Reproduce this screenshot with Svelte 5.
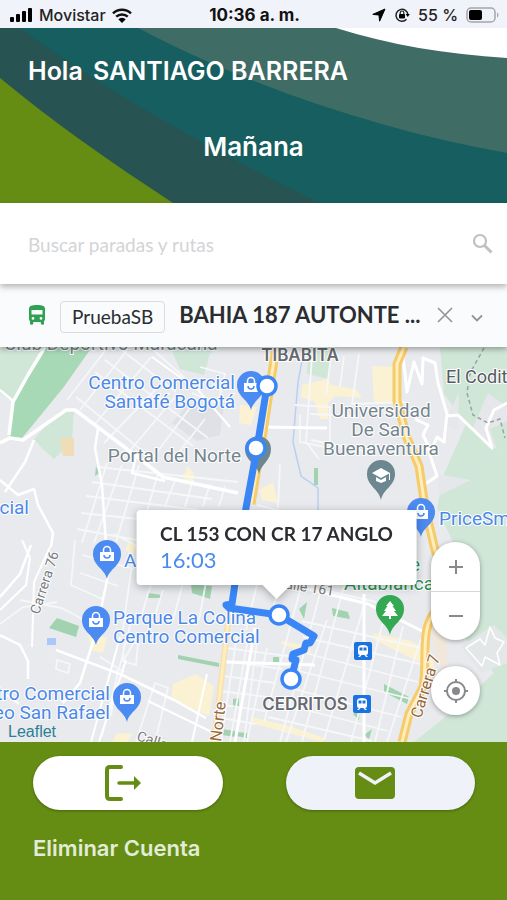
<script lang="ts">
  type Point = { x: number; y: number };
  type Label = Point & { text: string; kind: string; anchor?: string; rotate?: number };

  const user = 'SANTIAGO BARRERA';
  const stop = { name: 'CL 153 CON CR 17 ANGLO', time: '16:03' };

  let query = '';
  let routeVisible = true;

  // map geometry, in the units of the map viewBox
  const stops: Point[] = [
    { x: 267, y: 386 },
    { x: 256, y: 448 },
    { x: 279, y: 615 },
    { x: 291, y: 679 }
  ];

  const shops: Point[] = [
    { x: 251, y: 386 },
    { x: 107, y: 555 },
    { x: 96, y: 621 },
    { x: 127, y: 698 },
    { x: 421, y: 513 }
  ];

  const stations: Point[] = [
    { x: 363, y: 651 },
    { x: 362, y: 704 }
  ];

  const labels: Label[] = [
    { text: 'Club Deportivo Maracaná', x: 4, y: 350, kind: 'place' },
    { text: 'TIBABITA', x: 300, y: 361, kind: 'area', anchor: 'middle' },
    { text: 'El Codito', x: 446, y: 383, kind: 'town' },
    { text: 'Centro Comercial', x: 235, y: 389, kind: 'shop', anchor: 'end' },
    { text: 'Santafé Bogotá', x: 235, y: 408, kind: 'shop', anchor: 'end' },
    { text: 'Universidad', x: 381, y: 417, kind: 'place', anchor: 'middle' },
    { text: 'De San', x: 381, y: 436, kind: 'place', anchor: 'middle' },
    { text: 'Buenaventura', x: 381, y: 455, kind: 'place', anchor: 'middle' },
    { text: 'Portal del Norte', x: 241, y: 462, kind: 'place', anchor: 'end' },
    { text: 'Comercial', x: 29, y: 514, kind: 'shop', anchor: 'end' },
    { text: 'PriceSmart', x: 439, y: 525, kind: 'shop' },
    { text: 'Alta', x: 124, y: 567, kind: 'shop' },
    { text: 'Parque La Colina', x: 113, y: 624, kind: 'shop' },
    { text: 'Centro Comercial', x: 113, y: 643, kind: 'shop' },
    { text: 'Centro Comercial', x: 110, y: 700, kind: 'shop', anchor: 'end' },
    { text: 'Paseo San Rafael', x: 110, y: 719, kind: 'shop', anchor: 'end' },
    { text: 'Parque', x: 420, y: 571, kind: 'park', anchor: 'end' },
    { text: 'Altablanca', x: 434, y: 590, kind: 'park', anchor: 'end' },
    { text: 'CEDRITOS', x: 305, y: 710, kind: 'area', anchor: 'middle' },
    { text: 'Calle 161', x: 276, y: 587, kind: 'street', rotate: 9 },
    { text: 'Carrera 76', x: 39, y: 615, kind: 'street', rotate: -72 },
    { text: 'Calle', x: 136, y: 740, kind: 'street', rotate: 18 },
    { text: 'Norte', x: 221, y: 742, kind: 'highway', rotate: -83 },
    { text: 'Carrera 7', x: 421, y: 719, kind: 'highway', rotate: -73 }
  ];
</script>

<svelte:head>
  <title>Mañana</title>
</svelte:head>

<div class="app">
  <div class="status">
    <div class="status-side">
      <svg width="23" height="14" viewBox="0 0 23 14" aria-hidden="true">
        <rect x="0" y="9" width="4" height="5" rx="1" />
        <rect x="6" y="6" width="4" height="8" rx="1" />
        <rect x="12" y="3" width="4" height="11" rx="1" />
        <rect x="18" y="0" width="4" height="14" rx="1" />
      </svg>
      <span>Movistar</span>
      <svg width="20" height="15" viewBox="0 0 20 15" aria-hidden="true">
        <g fill="none" stroke="#111" stroke-width="2.5">
          <path d="M1 5.3a13 13 0 0 1 18 0" />
          <path d="M4.2 8.7a8.4 8.4 0 0 1 11.6 0" />
        </g>
        <path d="M10 15 6.3 11.2a5.3 5.3 0 0 1 7.4 0z" />
      </svg>
    </div>
    <strong class="clock">10:36 a. m.</strong>
    <div class="status-side right">
      <svg width="14" height="14" viewBox="0 0 14 14" aria-hidden="true">
        <path d="M13 1 7.6 13.2 7 7 .8 6.4z" stroke="#000" stroke-linejoin="round" />
      </svg>
      <svg width="16" height="16" viewBox="0 0 16 16" aria-hidden="true">
        <path d="M12.5 12.3A6 6 0 1 1 14 8" fill="none" stroke="#222" stroke-width="1.5" />
        <path d="M11.6 7h4.2l-2 3z" />
        <rect x="5" y="7" width="6" height="4.4" rx=".8" />
        <path d="M6.2 7V5.8a1.8 1.8 0 0 1 3.6 0V7" fill="none" stroke="#222" stroke-width="1.2" />
      </svg>
      <span>55 %</span>
      <svg width="33" height="16" viewBox="0 0 33 16" aria-hidden="true">
        <rect x="1" y="1" width="28" height="14" rx="4" fill="none" stroke="#a5a7ab" stroke-width="1.5" />
        <rect x="3" y="3" width="13" height="10" rx="2" fill="#000" />
        <path d="M31 5.5c2 1 2 4 0 5z" fill="#a5a7ab" />
      </svg>
    </div>
  </div>

  <header class="hero">
    <svg class="waves" viewBox="0 28 507 175" preserveAspectRatio="none" aria-hidden="true">
      <rect y="28" width="507" height="175" fill="#275452" />
      <path d="M20 28C94 82 190 140 320 203H507V28z" fill="#165e60" />
      <path d="M138 28C252 88 385 131 507 153V28z" fill="#406c66" />
      <path d="M336 28C390 45 446 54 507 58V28z" fill="#fff" />
      <path d="M0 78C52 121 110 162 173 203H0z" fill="#658d13" />
    </svg>
    <p class="greeting">Hola <span>{user}</span></p>
    <h1>Mañana</h1>
  </header>

  <form class="search" on:submit|preventDefault>
    <input type="text" bind:value={query} placeholder="Buscar paradas y rutas" aria-label="Buscar paradas y rutas" />
    <button type="submit" aria-label="Buscar">
      <svg width="24" height="24" viewBox="0 0 24 24" aria-hidden="true">
        <circle cx="9" cy="9" r="6" fill="none" stroke="currentColor" stroke-width="2.200" />
        <path d="m13.500 13.500 7 7" stroke="currentColor" stroke-width="3" />
      </svg>
    </button>
  </form>

  {#if routeVisible}
    <div class="route">
      <svg class="bus" width="18" height="20" viewBox="0 0 18 20" aria-hidden="true">
        <path fill-rule="evenodd" d="M9 0C4 0 1 .8 1 4v10c0 1 .4 1.700 1 2.200V18.500c0 .8.4 1.200 1.200 1.200h.8c.8 0 1.200-.4 1.200-1.200V17h7.600v1.500c0 .8.4 1.200 1.200 1.200h.8c.8 0 1.200-.4 1.200-1.200v-2.300c.6-.5 1-1.200 1-2.200V4c0-3.200-3-4-8-4zM3.500 5v4.500h11V5zM5 12a1.400 1.400 0 1 0 0 2.800A1.400 1.400 0 0 0 5 12zm8 0a1.400 1.400 0 1 0 0 2.800 1.400 1.400 0 0 0 0-2.800z" />
      </svg>
      <span class="tag">PruebaSB</span>
      <strong class="route-name">BAHIA 187 AUTONTE ...</strong>
      <button type="button" aria-label="Quitar ruta" on:click={() => (routeVisible = false)}>
        <svg width="16" height="16" viewBox="0 0 16 16" aria-hidden="true">
          <path d="m1 1 14 14M15 1 1 15" fill="none" stroke="currentColor" stroke-width="1.600" />
        </svg>
      </button>
      <button type="button" aria-label="Ver paradas">
        <svg width="16" height="16" viewBox="0 0 16 16" aria-hidden="true">
          <path d="m3 8.500 5 5 5-5" fill="none" stroke="currentColor" stroke-width="1.800" />
        </svg>
      </button>
    </div>
  {/if}

  <main class="map">
    <svg class="tiles" viewBox="0 347 507 395" preserveAspectRatio="xMidYMid slice" role="img" aria-label="Mapa de la ruta">
      <rect y="347" width="507" height="395" fill="#e8eaed" />

      <!-- parks and hills -->
      <g fill="#d0e7d8">
        <path d="M0 347H50L12 402 0 393zM170 347h42l-8 28-24-6zM440 347H507V590l-42-22-28-60 7-34 22-50-22-30z" />
        <path d="M478 575h29v167h-93l40-32 40-37-33-40z" />
        <path d="M34 439 60 411l14-1-2 32-18 17-11-10z" />
        <path d="M309 347h20v32l-22-5zM184 344h28v9h-28z" />
      </g>
      <path d="m444 425 15-33-1 38zM472 430l16-37 19 14v14l-17 8 7 21zM437 474l34 6-31 15z" fill="#e5e7ea" />
      <path d="m461 646 33-21 13 13v25l-26 10z" fill="#e3e7e8" />
      <path d="M45 347h47L63 388 22 438 10 437 13 400z" fill="#a8d9b6" />
      <path d="m57 618 22 8-3 11-27-9zM148 593l14 2v3h-14zM191 584l21 2-2 13-18-6zM178 655l41 8v4l-41-8zM332 608l16 4 2 7-17-3zM384 684l25 13-2 7-23-12zM299 609l8-7-3 17zM314 468h4v17h-4zM233 699l6-1v10h-6zM222 729l13 2v6l-13-2zM236 732l11 1v5l-11-2zM364 735l8-6-3 10zM96 466l3 7-4 3zM273 657h6v5h-6zM353 714l7-6-1 12z" fill="#a2d3b1" />
      <path d="m430 627 17 8v38l-10-12z" fill="#f1e7db" />
      <rect x="47" y="638" width="9" height="7" fill="#a9c8fa" />

      <!-- built-up blocks -->
      <g fill="#fbf2d3">
        <path d="m302 385 25-6 4 6 25 4 6 9-27-2-7 7v16h-8l-5-17-14-5zM372 366l23 1-1 37-20-1zM240 405l17 2-6 18-12-2zM187 466l7 7-1 12-10-6zM259 490l14-8 5 21-16-3zM129 540l8 6-6 12-5-9zM88 633l19 5-4 15-12-3zM173 684l23-10 18 12-5 30-38-16zM373 633l38 8 19 10 5 18-20-9-40-20zM282 641l26 5 4 8-31-10zM117 733l15 1-4 8h-16zM252 717l41 10 31 11-2 4-72-19z" />
      </g>
      <path d="M60 438h14v18H63z" fill="#f0dcb6" />
      <path d="m188 404 36 1-4 30-23 6-25-18z" fill="#dfe1e6" />
      <path d="m304 350-6 32-5 60 8 34 17 12v28" fill="none" stroke="#b9d0f4" stroke-width="1.500" />

      <!-- streets -->
      <g fill="none" stroke="#f6f7f9" stroke-width="1.800">
        <path d="m108 347-41 53M128 349l-48 61M151 357l-56 67M162 383l-58 60M176 396l-53 63M190 408l-38 51M205 419l-33 42" />
        <path d="m95 372 98 74M105 360l103 78M119 348l57 44M76 397l80 65M148 345l50 45M200 367l25 7-7 30-26-11" />
        <path d="m98 467 140 15M92 482l120 17M86 496l112 14M81 513l67 7M77 529l65 12M107 463l-25 80M122 465l-28 78M139 465l-23 77M158 473l-19 66M176 478l-11 28M193 480l-8 27M210 484l-7 22M225 486l-6 20" />
        <path d="m75 540-4 45 31 14M82 555l52 14M114 534l54 28 62 12M80 573l38 13M133 556l-11 80M151 584l-9 30M163 590l-10 32M183 583l-10 37M206 582l-7 38" />
        <path d="m252 574 124 28M263 560l-17 70M283 578l-13 38M303 580l-39 142M323 582l-43 160M344 586l-42 156M327 620l-41 122M365 602l-41 138M385 615l-34 127M403 626l-28 116M421 639l-34 103" />
        <path d="m302 621 128 29M303 637l122 28M297 651l121 31M291 669l120 30M282 686l119 31M275 702l113 29M268 717l104 24M226 648l62 8M225 661l57 8M224 676l51 7M220 691l47 6M216 704l49 7M222 718l33 6" />
        <path d="m237 635-16 107M248 638l-18 104M257 641l-13 101M267 648l-20 94" />
        <path d="m312 356-6 86 13 17M331 357l-5 38M344 356l-4 31M359 354l-7 50 53-2M310 414l45 2M311 440l58 12M295 405l35 2v41l-30-6v-27M280 464l-2 44M257 505l60 15" />
        <path d="m20 600 42 8 33 18M0 624l23-17 34-5M100 657l24 15M124 660l14-26M118 668l-7 48M132 618l-30 118M155 683l-19 59M155 683l13 5-11 46M57 660l13 4-2 9-12-4zM124 643h14l-2 22-13-4z" />
      </g>
      <g fill="none" stroke="#fff" stroke-linejoin="round">
        <path d="M45 347 28 375 13 402 9 435M0 443l10-5 13 2 43-30h9l60 45 28 22 75 16" stroke-width="3.500" />
        <path d="m0 390 13 11M34 440 25 462 5 492M0 480l18 15 16-6 4 16 15 28-2 14M98 429l-3 19 7 37 6 90-11 54-17 54-17 20M56 650l64 24 54 26 32 18M0 635l20 10 8 16v18M136 456l-4 17 33 8M31 545 20 574 0 597" stroke-width="2.500" />
        <path d="m152 357 46 33 32 37M120 637 91 742M126 660l-27 82M207 674 192 742M148 701l70 34M22 540l8 18-4 27-26 25M50 547l-16 35-2 65M0 690l19 14" stroke-width="2" />
        <path d="m259 427 68 1M248 574l120 30 62 31M258 560l95 19M255 628l-20 114M364 594v148M225 662l90 3" stroke-width="3" />
        <path d="m402 347 5 45 7-30 8 22 1-26 12 5 3 20 9 31-3 28-7-5-6 14-8-16 5-10-13-6M421 487l16-11-10-30M448 416l10-1 34 33-6-20 8-18 13-7" stroke-width="3" />
        <path d="m466 648 14-9 5 6 5-18 5 11 9 4-7 11 3 12-15-8-3 9z" stroke-width="1.500" />
      </g>
      <path d="m484 348-14 25-3 20 6 22 15 8 12-4 5 19" fill="none" stroke="#9aa1a5" stroke-width="1.500" stroke-dasharray="4 3" />

      <!-- main highways -->
      <g fill="none" stroke-linejoin="round">
        <g stroke="#f5cb6b" stroke-width="9">
          <path d="m276 347-13 85-12 72" />
          <path d="m404 347-7 17v37l10 37 12 28 6 41 10 43 7 18M437 610c-18 16-9 50-14 77l-14 27-7 28" />
        </g>
        <path d="m230 606-16 136" stroke="#f7e0b0" stroke-width="6" />
        <g stroke="#fdeebb" stroke-width="3">
          <path d="m276 347-13 85-12 72" />
          <path d="m404 347-7 17v37l10 37 12 28 6 41 10 43 7 18M437 610c-18 16-9 50-14 77l-14 27-7 28M230 606l-16 136" />
        </g>
      </g>

      {#each labels as l}
        <text
          class={l.kind}
          x={l.x}
          y={l.y}
          text-anchor={l.anchor ?? 'start'}
          transform={l.rotate ? `rotate(${l.rotate} ${l.x} ${l.y})` : undefined}>{l.text}</text>
      {/each}

      <!-- place markers -->
      {#each shops as s}
        <g transform="translate({s.x} {s.y})">
          <path d="M0 24C-2 14-14 11-14-1a14 14 0 0 1 28 0C14 11 2 14 0 24z" fill="#4c8bf2" />
          <path d="M-7-3H7V6H-7z" fill="#fff" />
          <path d="M-3.500-2v-3a3.500 3.500 0 0 1 7 0v3" fill="none" stroke="#fff" stroke-width="1.500" />
          <path d="M-3 0a3 3 0 0 0 6 0" fill="none" stroke="#4c8bf2" stroke-width="1.500" />
        </g>
      {/each}
      <g transform="translate(381 475)">
        <path d="M0 25C-2 14-14 11-14-1a14 14 0 0 1 28 0C14 11 2 14 0 25z" fill="#6c8790" />
        <path d="m-9-2 9-5 9 5-9 5zM-5 2l5 3 5-3v4L0 8l-5-2zM8-2h1v7H8z" fill="#fff" />
      </g>
      <path d="M259 474c-2-10-14-13-14-25a13 13 0 0 1 26 0c0 12-10 15-12 25z" fill="#6c8790" />
      <g transform="translate(390 610)">
        <path d="M0 25C-2 14-14 11-14-1a14 14 0 0 1 28 0C14 11 2 14 0 25z" fill="#34a853" />
        <path d="m0-9 4 5H2.500L6 1H4l4 5H1v3h-2V6h-7l4-5h-2l3.500-5H-4z" fill="#fff" />
      </g>
      {#each stations as s}
        <g transform="translate({s.x} {s.y})">
          <rect x="-9" y="-9" width="18" height="18" rx="2" fill="#1a73e0" />
          <path fill="#fff" fill-rule="evenodd" d="M-5-3q0-3 5-3t5 3v5q0 2-2 2l2 2H3L1.500 4h-3L-3 6h-2l2-2q-2 0-2-2zM-3.500-3.500v3h3v-3zM.5-3.500v3h3v-3z" />
        </g>
      {/each}

      <!-- travelled route -->
      <path d="M267 386 257 448 246 508 232 604 226 605 229 608 279 615 314 636 310 643 306 643 304 650 293 654 292 659 296 660 291 679" fill="none" stroke="#3a86f7" stroke-width="7" stroke-linejoin="round" stroke-linecap="round" />
      {#each stops as s}
        <circle cx={s.x} cy={s.y} r="9" fill="#fff" stroke="#3a86f7" stroke-width="3.500" />
      {/each}
    </svg>

    <div class="popup">
      <strong>{stop.name}</strong>
      <span>{stop.time}</span>
    </div>

    <div class="controls">
      <div class="zoom">
        <button type="button" aria-label="Acercar">
          <svg width="16" height="16" viewBox="0 0 16 16" aria-hidden="true"><path d="M8 1v14M1 8h14" /></svg>
        </button>
        <button type="button" aria-label="Alejar">
          <svg width="16" height="16" viewBox="0 0 16 16" aria-hidden="true"><path d="M1 8h14" /></svg>
        </button>
      </div>
      <button class="locate" type="button" aria-label="Mi ubicación">
        <svg width="24" height="24" viewBox="0 0 24 24" aria-hidden="true">
          <circle cx="12" cy="12" r="9" />
          <path d="M12 0v4M12 20v4M0 12h4M20 12h4" />
          <circle class="dot" cx="12" cy="12" r="4" />
        </svg>
      </button>
    </div>

    <a class="credit" href="#leaflet">Leaflet</a>
  </main>

  <footer>
    <div class="actions">
      <button type="button" aria-label="Salir">
        <svg width="36" height="36" viewBox="0 0 36 36" aria-hidden="true">
          <path d="M17 2H6Q3 2 3 5v26q0 3 3 3h11" fill="none" stroke="#658d13" stroke-width="4" stroke-linecap="round" />
          <path d="M15 18h15" stroke="#658d13" stroke-width="3.500" stroke-linecap="round" />
          <path d="m30 11 7 7-7 7z" fill="#658d13" />
        </svg>
      </button>
      <button class="mail" type="button" aria-label="Mensajes">
        <svg width="40" height="32" viewBox="0 0 40 32" aria-hidden="true">
          <rect width="40" height="32" rx="4" fill="#658d13" />
          <path d="m4 6 16 10L36 6" fill="none" stroke="#eff3f9" stroke-width="3.500" />
        </svg>
      </button>
    </div>
    <a class="delete" href="#eliminar">Eliminar Cuenta</a>
  </footer>
</div>

<style>
  :global(body) { background: #658d13; }

  .app {
    display: flex;
    flex-direction: column;
    min-height: 100vh;
    font-family: Lato, "Liberation Sans", sans-serif;
    color: #2b2d30;
  }

  button {
    display: flex;
    align-items: center;
    justify-content: center;
    padding: 0;
    border: 0;
    background: none;
    color: #929498;
    cursor: pointer;
  }

  /* phone status bar */
  .status {
    display: flex;
    align-items: center;
    height: 28px;
    padding: 2px 8px 0 10px;
    box-sizing: border-box;
    background: #f1f3fa;
    color: #222;
    font: 500 16px Inter, sans-serif;
  }
  .status-side { display: flex; flex: 1; align-items: center; gap: 6px; white-space: nowrap; }
  .right { justify-content: flex-end; gap: 8px; }
  .clock { font-size: 17px; font-weight: 700; color: #111; white-space: nowrap; }

  .hero {
    position: relative;
    height: 175px;
    color: #fff;
    font-family: Inter, sans-serif;
    overflow: hidden;
  }
  .waves { position: absolute; inset: 0; width: 100%; height: 100%; }
  .greeting, h1 { position: relative; margin: 0; line-height: 28px; font-weight: 600; }
  .greeting { padding: 29px 28px 0; font-size: 25px; }
  .greeting span { margin-left: 4px; }
  h1 { margin-top: 48px; font-size: 26px; text-align: center; }

  .search {
    position: relative;
    z-index: 3;
    display: flex;
    align-items: center;
    height: 81px;
    padding: 0 12px 0 28px;
    background: #fff;
    box-shadow: 0 3px 6px rgba(0, 0, 0, 0.28);
  }
  .search input {
    flex: 1;
    min-width: 0;
    padding: 2px 0 0;
    border: 0;
    outline: 0;
    background: none;
    font: 19px Lato, sans-serif;
  }
  .search input::placeholder { color: #d3d4d6; opacity: 1; }
  .search button { color: #bfc0c3; }

  .route {
    position: relative;
    z-index: 2;
    display: flex;
    align-items: center;
    box-sizing: border-box;
    height: 63px;
    padding: 0 22px 2px 28px;
    background: #f9fbfd;
    box-shadow: 0 2px 6px rgba(0, 0, 0, 0.35);
  }
  .bus { flex: none; fill: #2fa152; }
  .tag {
    margin: 4px 14px 0;
    padding: 0 11px;
    border: 1px solid #d9dbdf;
    border-radius: 4px;
    font-size: 19px;
    line-height: 30px;
  }
  .route-name {
    flex: 1;
    font-size: 22px;
    line-height: 28px;
    font-weight: 700;
    white-space: nowrap;
  }
  .route button { width: 16px; height: 32px; margin-left: 16px; }

  .map {
    position: relative;
    flex: 1;
    min-height: 395px;
    overflow: hidden;
    background: #e8eaed;
  }
  .tiles { position: absolute; inset: 0; width: 100%; height: 100%; }
  .tiles text {
    font-family: Roboto, sans-serif;
    font-size: 19px;
    stroke: #fff;
    stroke-width: 2px;
    paint-order: stroke;
  }
  .tiles .shop { fill: #4c88e8; }
  .tiles .place { fill: #74848e; }
  .tiles .town { fill: #555b61; font-size: 18px; }
  .tiles .park { fill: #2c9157; }
  .tiles .area { fill: #666b72; font-family: Inter, sans-serif; font-size: 17px; font-weight: 600; }
  .tiles .street { fill: #777b80; font-size: 14px; }
  .tiles .highway { fill: #98683b; font-size: 16px; }

  .popup {
    position: absolute;
    top: calc(50% - 35px);
    left: calc(50% + 23px);
    display: flex;
    flex-direction: column;
    box-sizing: border-box;
    padding: 11px 24px 12px;
    border-radius: 4px;
    background: #fff;
    transform: translateX(-50%);
    white-space: nowrap;
    filter: drop-shadow(0 2px 4px rgba(0, 0, 0, 0.3));
  }
  .popup::after {
    content: "";
    position: absolute;
    top: 100%;
    left: 50%;
    border: 14px solid transparent;
    border-top-color: #fff;
    border-bottom: 0;
    transform: translateX(-50%);
  }
  .popup strong { font-size: 19px; line-height: 26px; }
  .popup span { color: #4c8bef; font-size: 22px; line-height: 26px; }

  .controls {
    position: absolute;
    right: 27px;
    bottom: 27px;
    display: flex;
    flex-direction: column;
    gap: 26px;
  }
  .zoom, .locate {
    width: 49px;
    border-radius: 25px;
    background: #fff;
    box-shadow: 0 1px 5px rgba(0, 0, 0, 0.35);
  }
  .zoom button { width: 100%; height: 49px; }
  .zoom button + button { border-top: 1px solid #d5d6d8; }
  .locate { height: 49px; }
  .controls svg { fill: none; stroke: #88898c; stroke-width: 2; }
  .controls .dot { fill: #88898c; stroke: none; }

  .credit {
    position: absolute;
    bottom: 0;
    left: 8px;
    color: #2a7f95;
    font: 16px/20px "Liberation Sans", sans-serif;
    text-decoration: none;
  }

  footer { height: 158px; background: #658d13; }
  .actions {
    display: grid;
    grid-template-columns: 1fr 1fr;
    gap: 63px;
    padding: 14px 32px 0 33px;
  }
  .actions button {
    height: 54px;
    padding-right: 11px;
    border-radius: 27px;
    background: #fff;
    box-shadow: 0 1px 3px rgba(0, 0, 0, 0.3);
  }
  .actions svg { overflow: visible; }
  .actions .mail { background: #eff3f9; }
  .delete {
    display: inline-block;
    margin: 24px 33px 0;
    color: #e2ecd8;
    font: 600 22px/28px Inter, sans-serif;
    text-decoration: none;
  }
</style>
